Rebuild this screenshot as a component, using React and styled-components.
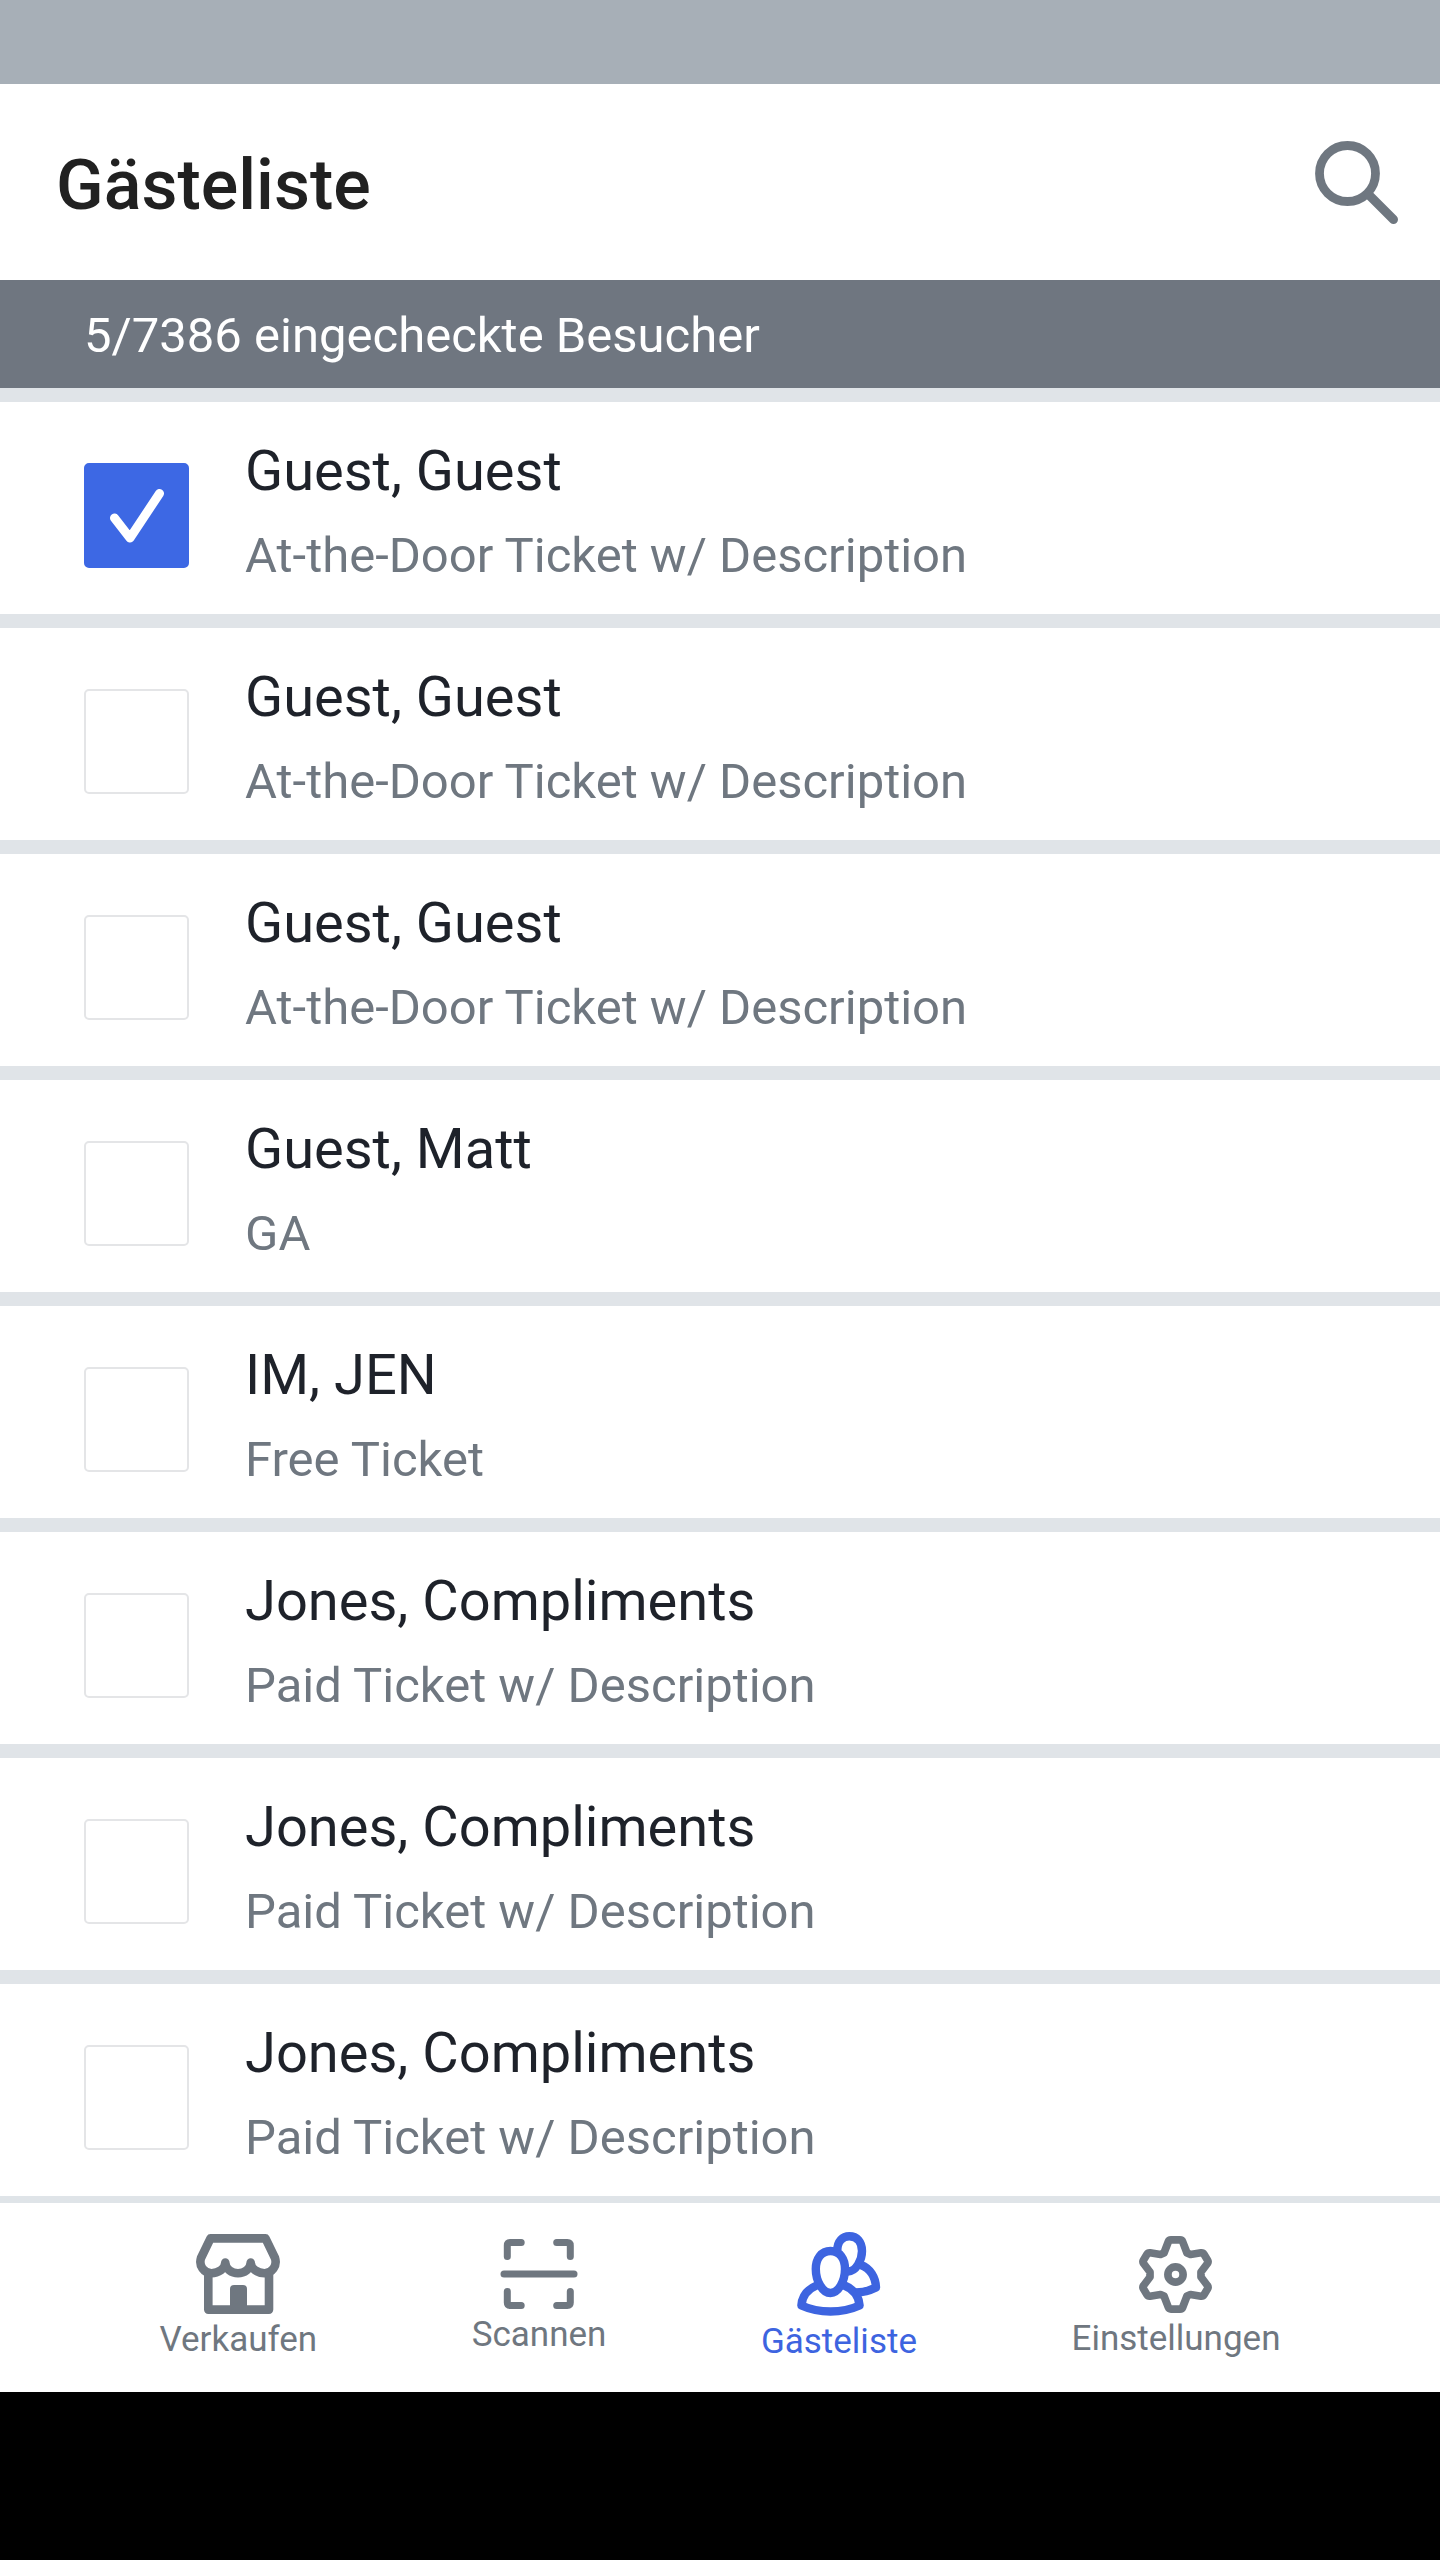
import React, { useState } from "react";
import styled, { createGlobalStyle } from "styled-components";

const GlobalStyle = createGlobalStyle`
  * {
    box-sizing: border-box;
  }
  body {
    margin: 0;
    background-color: #000;
    font-family: Roboto, sans-serif;
  }
`;

const Screen = styled.div`
  min-height: 100vh;
  display: flex;
  flex-direction: column;
  background-color: #fff;
`;

const StatusBar = styled.div`
  height: 84px;
  background-color: #a7afb7;
`;

const Header = styled.header`
  display: flex;
  align-items: center;
  justify-content: space-between;
  height: 196px;
  padding: 0 42px 0 56px;
`;

const Title = styled.h1`
  margin: 0;
  padding-top: 6px;
  font-size: 70px;
  line-height: 84px;
  font-weight: 500;
  color: #212121;
`;

const SearchButton = styled.button`
  display: flex;
  padding: 0;
  border: none;
  background: none;
  color: #6f7780;
  cursor: pointer;
`;

const Summary = styled.p`
  margin: 0;
  padding: 14px 84px 10px;
  font-size: 49px;
  line-height: 84px;
  color: #fff;
  background-color: #6f7680;
`;

const GuestList = styled.ul`
  flex: 1;
  margin: 0;
  padding: 0;
  list-style: none;
`;

const GuestItem = styled.li`
  border-top: 14px solid #e0e4e8;
`;

const GuestRow = styled.label`
  display: flex;
  align-items: center;
  gap: 56px;
  padding: 28px 84px 14px;
  cursor: pointer;
`;

const CheckWrap = styled.span`
  display: grid;
  flex: none;
  & > * {
    grid-area: 1 / 1;
  }
`;

const Checkbox = styled.input`
  appearance: none;
  margin: 0;
  width: 105px;
  height: 105px;
  border: 2px solid #e4e5e7;
  border-radius: 5px;
  background-color: #fff;
  cursor: pointer;
  &:checked {
    border-color: #3d68e4;
    background-color: #3d68e4;
  }
`;

const Tick = styled.svg`
  pointer-events: none;
`;

const GuestText = styled.span`
  display: flex;
  flex-direction: column;
`;

const GuestName = styled.span`
  font-size: 56px;
  line-height: 82px;
  color: #1e222a;
`;

const TicketType = styled.span`
  font-size: 49px;
  line-height: 88px;
  color: #6f7780;
`;

const TabBar = styled.nav`
  display: flex;
  justify-content: space-evenly;
  align-items: center;
  height: 196px;
  padding: 0 5px;
  border-top: 7px solid #dfe4e8;
`;

const Tab = styled.a`
  display: flex;
  flex-direction: column;
  align-items: center;
  gap: 5px;
  font-size: 35px;
  line-height: 42px;
  text-decoration: none;
  color: ${(props) => (props.$active ? "#3d64e0" : "#6f7780")};
`;

const SystemBar = styled.div`
  height: 168px;
  background-color: #000;
`;

const SearchIcon = () => (
  <svg width="83" height="83" viewBox="0 0 83 83" fill="none" stroke="currentColor" strokeLinecap="round">
    <circle cx="32.5" cy="32.5" r="28" strokeWidth="8.8" />
    <path d="M54 54L78.5 78.5" strokeWidth="9" />
  </svg>
);

const StoreIcon = () => (
  <svg width="84" height="80" viewBox="0 0 84 80" fill="none" stroke="currentColor" strokeWidth="8.6" strokeLinejoin="round">
    <path d="M29.3 28.5C29.3 35 22 39.2 15.5 39.2C8 39.2 2.5 32 5 24L14.5 4.4H69.5L79 24C81.5 32 76 39.2 68.5 39.2C62 39.2 54.7 35 54.7 28.5C54.7 35 48 39.2 42 39.2C36 39.2 29.3 35 29.3 28.5Z" />
    <path d="M12.3 39V75.6H73V39" />
    <path d="M34 78V55Q34 51 38 51H47Q51 51 51 55V78Z" fill="currentColor" stroke="none" />
  </svg>
);

const ScanIcon = () => (
  <svg width="78" height="70" viewBox="0 0 78 70" fill="none" stroke="currentColor" strokeWidth="7" strokeLinecap="round" strokeLinejoin="round">
    <path d="M7.3 17.5V6.5Q7.3 3.5 10.3 3.5H21.2" />
    <path d="M56.7 3.5H67.3Q70.3 3.5 70.3 6.5V17.5" />
    <path d="M7.3 52.5V63.5Q7.3 66.5 10.3 66.5H21.2" />
    <path d="M56.7 66.5H67.3Q70.3 66.5 70.3 63.5V52.5" />
    <path d="M4 35H74" />
  </svg>
);

const GuestsIcon = () => (
  <svg width="84" height="84" viewBox="0 0 84 84" fill="none" stroke="currentColor" strokeWidth="8.4" strokeLinejoin="round">
    <path d="M33.5 19C43 19 48 27 48 37C48 49 41.5 61 33.5 61S18.8 49 18.8 37C18.8 27 24 19 33.5 19Z" />
    <path d="M20.5 53C11 57 5 64 4.4 73.5C22 81.5 45 81.5 62.6 73.5C62 64 56.5 57 46.5 53" />
    <path d="M40.3 19C40 9 46 4.2 52.3 4.2C60 4.2 65 10 65 19C65 28 59 39.5 51 39.5" />
    <path d="M64 33C73 36.5 78.5 45 79 55.5C73 58.5 67 60.3 59 60.5" />
  </svg>
);

const GearIcon = () => (
  <svg width="73" height="77" viewBox="0 0 73 77" fill="none" stroke="currentColor" strokeWidth="7.7" strokeLinejoin="round">
    <path d="M32 3.9H41Q43 3.9 43.6 5.5L48 17L51.5 18.5L62 16.8Q64 16.6 65 18.2L68.6 24.3Q69.6 26 68.4 27.5L62 36V41L68.4 49.5Q69.6 51 68.6 52.7L65 58.8Q64 60.4 62 60.2L51.5 58.5L48 60L43.6 71.5Q43 73.1 41 73.1H32Q30 73.1 29.4 71.5L25 60L21.5 58.5L11 60.2Q9 60.4 8 58.8L4.4 52.7Q3.4 51 4.6 49.5L11 41V36L4.6 27.5Q3.4 26 4.4 24.3L8 18.2Q9 16.6 11 16.8L21.5 18.5L25 17L29.4 5.5Q30 3.9 32 3.9Z" />
    <circle cx="36.5" cy="38.5" r="7.6" />
  </svg>
);

const initialGuests = [
  { id: 1, name: "Guest, Guest", ticket: "At-the-Door Ticket w/ Description", checked: true },
  { id: 2, name: "Guest, Guest", ticket: "At-the-Door Ticket w/ Description", checked: false },
  { id: 3, name: "Guest, Guest", ticket: "At-the-Door Ticket w/ Description", checked: false },
  { id: 4, name: "Guest, Matt", ticket: "GA", checked: false },
  { id: 5, name: "IM, JEN", ticket: "Free Ticket", checked: false },
  { id: 6, name: "Jones, Compliments", ticket: "Paid Ticket w/ Description", checked: false },
  { id: 7, name: "Jones, Compliments", ticket: "Paid Ticket w/ Description", checked: false },
  { id: 8, name: "Jones, Compliments", ticket: "Paid Ticket w/ Description", checked: false },
];

const tabs = [
  { id: "verkaufen", label: "Verkaufen", Icon: StoreIcon },
  { id: "scannen", label: "Scannen", Icon: ScanIcon },
  { id: "gaesteliste", label: "Gästeliste", Icon: GuestsIcon },
  { id: "einstellungen", label: "Einstellungen", Icon: GearIcon },
];

function Guest({ guest, onToggle }) {
  return (
    <GuestItem>
      <GuestRow>
        <CheckWrap>
          <Checkbox type="checkbox" checked={guest.checked} onChange={() => onToggle(guest.id)} />
          {guest.checked && (
            <Tick width="105" height="105" viewBox="0 0 105 105" fill="none" stroke="#fff" strokeWidth="9" strokeLinecap="round" strokeLinejoin="round">
              <path d="M30.5 55L46 75L75.5 30.5" />
            </Tick>
          )}
        </CheckWrap>
        <GuestText>
          <GuestName>{guest.name}</GuestName>
          <TicketType>{guest.ticket}</TicketType>
        </GuestText>
      </GuestRow>
    </GuestItem>
  );
}

export default function App() {
  const [guests, setGuests] = useState(initialGuests);
  const [active, setActive] = useState("gaesteliste");

  const handleToggle = (id) =>
    setGuests(guests.map((g) => (g.id === id ? { ...g, checked: !g.checked } : g)));

  return (
    <>
      <GlobalStyle />
      <Screen>
        <StatusBar />
        <Header>
          <Title>Gästeliste</Title>
          <SearchButton type="button" aria-label="Suchen">
            <SearchIcon />
          </SearchButton>
        </Header>
        <Summary>5/7386 eingecheckte Besucher</Summary>
        <GuestList>
          {guests.map((guest) => (
            <Guest key={guest.id} guest={guest} onToggle={handleToggle} />
          ))}
        </GuestList>
        <TabBar>
          {tabs.map(({ id, label, Icon }) => (
            <Tab key={id} href={`#${id}`} $active={id === active} onClick={() => setActive(id)}>
              <Icon />
              {label}
            </Tab>
          ))}
        </TabBar>
        <SystemBar />
      </Screen>
    </>
  );
}
